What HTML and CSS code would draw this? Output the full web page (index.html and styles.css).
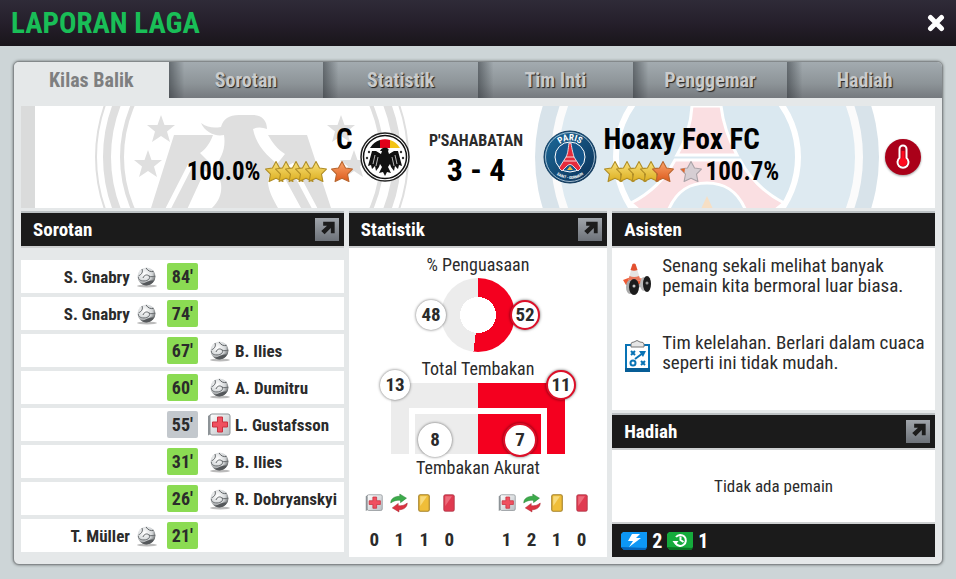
FILE: index.html
```
<!DOCTYPE html>
<html lang="id">
  <head>
    <meta charset="UTF-8" />
    <meta name="viewport" content="width=device-width, initial-scale=1.0" />
    <title>Laporan Laga</title>
    <link rel="stylesheet" href="styles.css">
  </head>
  <body>
    <!-- shared icons -->
    <svg class="defs" width="0" height="0" aria-hidden="true">
      <defs>
        <linearGradient id="gold" x1="0" y1="0" x2="0" y2="1">
          <stop offset="0" stop-color="#f8e07a" />
          <stop offset="1" stop-color="#dcae1e" />
        </linearGradient>
        <linearGradient id="orange" x1="0" y1="0" x2="0" y2="1">
          <stop offset="0" stop-color="#f9a36a" />
          <stop offset="1" stop-color="#dd5a1c" />
        </linearGradient>
        <linearGradient id="silver" x1="0" y1="0" x2="1" y2="1">
          <stop offset="0" stop-color="#ffffff" />
          <stop offset="1" stop-color="#b9bec2" />
        </linearGradient>
        <radialGradient id="leather" cx="0.4" cy="0.35" r="0.7">
          <stop offset="0" stop-color="#ffffff" />
          <stop offset="0.6" stop-color="#d5d8da" />
          <stop offset="1" stop-color="#4c4f51" />
        </radialGradient>
        <linearGradient id="psg" x1="0" y1="0" x2="1" y2="1">
          <stop offset="0" stop-color="#1d6c9c" />
          <stop offset="1" stop-color="#0b2f55" />
        </linearGradient>
        <path id="star-shape" d="M11 1.500l3.200 5.800 6.300 1-4.500 4.700 1.300 6.700-6.300-3-6.300 3L6 13 1.500 8.300l6.300-1z" />
        <symbol id="star-gold" viewBox="1 1 20 20">
          <use href="#star-shape" fill="url(#gold)" stroke="#b08d26" stroke-linejoin="round" />
        </symbol>
        <symbol id="star-orange" viewBox="1 1 20 20">
          <use href="#star-shape" fill="url(#orange)" stroke="#b9662f" stroke-linejoin="round" />
        </symbol>
        <symbol id="star-empty" viewBox="1 1 20 20">
          <use href="#star-shape" fill="#d6ced3" stroke="#aaa3a8" stroke-linejoin="round" />
          <path d="M1.500 8.300l4-.7L5 12z" fill="#e0662a" />
        </symbol>
        <symbol id="ball" viewBox="0 0 24 24">
          <ellipse cx="13" cy="21" rx="10" ry="1.500" fill="#777" opacity="0.500" />
          <circle cx="12.500" cy="11.500" r="9" fill="url(#leather)" />
          <path d="M8 4c1 3 0 5-3.500 7M12 3c2 3 4.500 4 7.500 3.500M9 13c1-3 4-4 6-2s-1 5-5 5-6-2-5.500-4M15 11c2 1 4 1 6 0" fill="none" stroke="#606467" stroke-width="1" />
          <path d="M6.500 18c2 .8 4 .3 6-1s5-1.800 7.500-1.500c-2 5-9.500 6.500-13.500 2.500z" fill="#55585b" />
        </symbol>
        <symbol id="medic" viewBox="0 0 24 24">
          <path d="M1 3l3-2v20l-3 1.500z" fill="#8d9397" />
          <rect x="3" y="1" width="20" height="21" rx="2" fill="url(#silver)" stroke="#8d9397" />
          <path d="M10.500 4h5v5h5v5h-5v5h-5v-5h-5V9h5z" fill="#f0505f" stroke="#c9303f" />
        </symbol>
        <symbol id="swap" viewBox="0 0 24 24">
          <path d="M1 12C1 6 6 3 13 3V0l9 5.500-8 6V8.500C9 8 5 9 1 12z" fill="#3cab4b" stroke="#237a31" stroke-width="0.600" />
          <path d="M23 12c0 6-5 9-11 9v3L3 18.500l8-6v3c4 .5 8 0 12-3.500z" fill="#dc3341" stroke="#a11f2b" stroke-width="0.600" />
        </symbol>
        <symbol id="yellow-card" viewBox="0 0 24 24">
          <rect x="5" y="1" width="14" height="22" rx="2" fill="#f0be38" stroke="#a5822a" stroke-width="1.500" />
          <path d="M7 3h9L7 16z" fill="#f8da7b" />
        </symbol>
        <symbol id="red-card" viewBox="0 0 24 24">
          <rect x="5" y="1" width="14" height="22" rx="2" fill="#e03a50" stroke="#a83343" stroke-width="1" />
          <path d="M7 3h9L7 16z" fill="#ed6c7b" />
        </symbol>
        <symbol id="open" viewBox="0 0 24 24">
          <path d="M8 4h12v12h-4v-5.500l-6.500 6.500L6 13.500 12 8H8z" fill="#1c1c1c" />
        </symbol>
      </defs>
    </svg>

    <header class="topbar">
      <h1>LAPORAN LAGA</h1>
      <button type="button" class="close" aria-label="Tutup">
        <svg width="18" height="18" viewBox="0 0 18 18">
          <path d="M3.500 3.500l11 11M14.500 3.500l-11 11" stroke="#fff" stroke-width="5" stroke-linecap="round" />
        </svg>
      </button>
    </header>

    <main>
      <div class="panel">
        <nav class="tabs">
          <button type="button" class="tab active">Kilas Balik</button>
          <button type="button" class="tab">Sorotan</button>
          <button type="button" class="tab">Statistik</button>
          <button type="button" class="tab">Tim Inti</button>
          <button type="button" class="tab">Penggemar</button>
          <button type="button" class="tab">Hadiah</button>
        </nav>

        <div class="content">
          <section class="banner">
            <div class="team home">
              <svg class="backdrop" width="316" height="102" viewBox="0 0 316 102" aria-hidden="true">
                <g fill="none" stroke="#dfdfdf">
                  <circle cx="158" cy="51" r="156" stroke-width="2" />
                  <circle cx="158" cy="51" r="145" stroke-width="8" />
                  <circle cx="158" cy="51" r="130" stroke-width="4" />
                </g>
                <g fill="#dfdfdf">
                  <path id="bg-star" d="M67 9l3.500 10H81l-8 6.500 3 10.500-9-6-9 6 3-10.500-8-6.500h10.500z" />
                  <use href="#bg-star" x="-13" y="35" />
                  <use href="#bg-star" x="180" />
                  <use href="#bg-star" x="193" y="35" />
                  <path d="M107 17c7 5 13 5 20 4 2-8 8-12 18-12h14c9 0 14 6 14 14-5-2-10-2-14 0 3 15 12 26 27 37-8 5-12 10-12 17 1 9 5 16 10 25h-66c8-8 10-16 9-24-1-7-5-12-9-15 10-10 14-21 12-34-9 2-19-3-23-12z" />
                  <path d="M80 29h39c-3 8-7 14-13 18l11 11-21 44H57z" />
                  <path d="M174 29h39l24 73h-30l-24-44 8-10c-8-5-13-12-17-19z" />
                </g>
                <g stroke="#fff" stroke-width="5">
                  <path d="M97 58L74 103M113 66l-17 37M197 58l24 45M182 66l16 37" />
                </g>
              </svg>
              <div class="team-info">
                <h2>C</h2>
                <div class="rating">
                  <span>100.0%</span>
                  <span class="stars">
                    <svg><use href="#star-gold" /></svg>
                    <svg><use href="#star-gold" /></svg>
                    <svg><use href="#star-gold" /></svg>
                    <svg><use href="#star-gold" /></svg>
                    <svg><use href="#star-gold" /></svg>
                    <svg class="extra"><use href="#star-orange" /></svg>
                  </span>
                </div>
              </div>
              <svg class="crest" width="50" height="50" viewBox="0 0 50 50" aria-hidden="true">
                <circle cx="25" cy="25" r="24" fill="#fff" stroke="#222" stroke-width="1.500" />
                <circle cx="25" cy="25" r="21.500" fill="#fff" stroke="#111" stroke-width="1.500" />
                <path d="M10 16a18 18 0 0 1 10-8v8z" fill="#111" />
                <path d="M20 8q5-1.500 10 0v8H20z" fill="#e2001a" />
                <path d="M30 8a18 18 0 0 1 10 8H30z" fill="#f3c415" />
                <path d="M20 19c1-3 4-4 7-3 2 1 2 2 1 3l1 3 5-3h4l4 15-3-1-1 4-3-3-1 5-3-4-1-3-2 3 3 6-4-1-2 4-2-4-4 1 3-6-2-3-1 3-3 4-1-5-3 3-1-4-3 1 4-15h4l5 3 1-3z" fill="#111" />
                <path d="M15 23l-2 9M18 25l-2 9M35 23l2 9M32 25l2 9" stroke="#fff" stroke-width="0.700" />
                <g fill="#333">
                  <circle cx="9" cy="20" r="1.200" /><circle cx="7" cy="26" r="1.200" />
                  <circle cx="41" cy="20" r="1.200" /><circle cx="43" cy="26" r="1.200" />
                </g>
              </svg>
            </div>

            <div class="score">
              <p>P'SAHABATAN</p>
              <strong>3 - 4</strong>
            </div>

            <div class="team away">
              <svg class="backdrop" width="344" height="102" viewBox="0 0 344 102" aria-hidden="true">
                <circle cx="172" cy="51" r="172" fill="#d8e3ea" />
                <circle cx="172" cy="51" r="152" fill="#deeaf1" stroke="#fbfbfb" stroke-width="8" />
                <circle cx="172" cy="51" r="91" fill="#dae8f0" stroke="#fff" stroke-width="6" />
                <path d="M157 0h29c2 18 8 34 16 49h-60c9-15 14-31 15-49zM140 54h65c10 19 25 33 44 43l-10 8h-28c-9-22-23-28-39-28s-30 6-39 28h-28l-9-8c20-10 34-24 44-43z" fill="#fadfe2" stroke="#fff" stroke-width="3" />
                <path d="M172 90l6 13h-12z" fill="#f6dfc5" />
              </svg>
              <svg class="crest" width="54" height="54" viewBox="0 0 54 54" aria-hidden="true">
                <defs>
                  <path id="arc-top" d="M10.500 27a16.500 16.500 0 0 1 33 0" />
                  <path id="arc-bottom" d="M5 27a22 22 0 0 0 44 0" />
                </defs>
                <circle cx="27" cy="27" r="26" fill="url(#psg)" stroke="#123a5c" />
                <circle cx="27" cy="27" r="24.500" fill="none" stroke="#c5d6e2" stroke-width="0.800" />
                <circle cx="27" cy="27" r="15" fill="#14558a" stroke="#fff" />
                <path d="M26 13h2c1 7 2 10 3 14l7 11-3 3-5-5c-2-2-4-2-6 0l-5 5-3-3 7-11c2-4 2-7 3-14z" fill="#e52b3c" stroke="#fff" stroke-width="0.800" />
                <path d="M23 27h8M21 31h12" stroke="#fff" stroke-width="0.800" />
                <path d="M27 36l3 4h-6z" fill="#e7b845" />
                <text class="crest-name"><textPath href="#arc-top" startOffset="50%">PARIS</textPath></text>
                <text class="crest-sub"><textPath href="#arc-bottom" startOffset="50%">SAINT - GERMAIN</textPath></text>
              </svg>
              <div class="team-info">
                <h2>Hoaxy Fox FC</h2>
                <div class="rating">
                  <span class="stars">
                    <svg><use href="#star-gold" /></svg>
                    <svg><use href="#star-gold" /></svg>
                    <svg><use href="#star-gold" /></svg>
                    <svg><use href="#star-gold" /></svg>
                    <svg><use href="#star-orange" /></svg>
                    <svg class="extra"><use href="#star-empty" /></svg>
                  </span>
                  <span>100.7%</span>
                </div>
              </div>
              <svg class="weather" width="38" height="38" viewBox="0 0 38 38" role="img" aria-label="Cuaca panas">
                <circle cx="19" cy="19" r="18" fill="#aa0019" />
                <path d="M15.500 11a3.500 3.500 0 0 1 7 0v9a5.500 5.500 0 1 1-7 0z" fill="#aa0019" stroke="#fff" stroke-width="2" />
                <path d="M19 13v10" stroke="#ff0a1e" stroke-width="3" />
                <circle cx="19" cy="24" r="4" fill="#ff0a1e" />
              </svg>
            </div>
          </section>

          <div class="columns">
            <section class="column">
              <div class="bar">
                <h3>Sorotan</h3>
                <button type="button" class="open" aria-label="Buka Sorotan"><svg><use href="#open" /></svg></button>
              </div>
              <ul class="events">
                <li>
                  <span class="player left">S. Gnabry <svg><use href="#ball" /></svg></span>
                  <span class="minute">84'</span>
                </li>
                <li>
                  <span class="player left">S. Gnabry <svg><use href="#ball" /></svg></span>
                  <span class="minute">74'</span>
                </li>
                <li>
                  <span class="minute">67'</span>
                  <span class="player"><svg><use href="#ball" /></svg> B. Ilies</span>
                </li>
                <li>
                  <span class="minute">60'</span>
                  <span class="player"><svg><use href="#ball" /></svg> A. Dumitru</span>
                </li>
                <li>
                  <span class="minute neutral">55'</span>
                  <span class="player"><svg><use href="#medic" /></svg> L. Gustafsson</span>
                </li>
                <li>
                  <span class="minute">31'</span>
                  <span class="player"><svg><use href="#ball" /></svg> B. Ilies</span>
                </li>
                <li>
                  <span class="minute">26'</span>
                  <span class="player"><svg><use href="#ball" /></svg> R. Dobryanskyi</span>
                </li>
                <li>
                  <span class="player left">T. Müller <svg><use href="#ball" /></svg></span>
                  <span class="minute">21'</span>
                </li>
              </ul>
            </section>

            <section class="column">
              <div class="bar">
                <h3>Statistik</h3>
                <button type="button" class="open" aria-label="Buka Statistik"><svg><use href="#open" /></svg></button>
              </div>
              <div class="stats">
                <h4>% Penguasaan</h4>
                <div class="possession">
                  <span class="value home-value">48</span>
                  <div class="donut"></div>
                  <span class="value away-value">52</span>
                </div>
                <h4>Total Tembakan</h4>
                <div class="shots">
                  <div class="on-target"></div>
                  <span class="value total-home">13</span>
                  <span class="value total-away">11</span>
                  <span class="value target-home">8</span>
                  <span class="value target-away">7</span>
                </div>
                <h4>Tembakan Akurat</h4>
                <div class="counts">
                  <table>
                    <tr>
                      <th><svg role="img" aria-label="Cedera"><use href="#medic" /></svg></th>
                      <th><svg role="img" aria-label="Pergantian"><use href="#swap" /></svg></th>
                      <th><svg role="img" aria-label="Kartu kuning"><use href="#yellow-card" /></svg></th>
                      <th><svg role="img" aria-label="Kartu merah"><use href="#red-card" /></svg></th>
                    </tr>
                    <tr><td>0</td><td>1</td><td>1</td><td>0</td></tr>
                  </table>
                  <table>
                    <tr>
                      <th><svg role="img" aria-label="Cedera"><use href="#medic" /></svg></th>
                      <th><svg role="img" aria-label="Pergantian"><use href="#swap" /></svg></th>
                      <th><svg role="img" aria-label="Kartu kuning"><use href="#yellow-card" /></svg></th>
                      <th><svg role="img" aria-label="Kartu merah"><use href="#red-card" /></svg></th>
                    </tr>
                    <tr><td>1</td><td>2</td><td>1</td><td>0</td></tr>
                  </table>
                </div>
              </div>
            </section>

            <section class="column">
              <div class="bar">
                <h3>Asisten</h3>
              </div>
              <div class="assistant">
                <div class="tip">
                  <svg width="30" height="34" viewBox="0 0 30 34" aria-hidden="true">
                    <path d="M1 18l8-3 14 2 2 4-10 5-11-3z" fill="#ef5a34" />
                    <path d="M10.500 2q1.500-1 3 0l5 16q-6 4-12 0z" fill="#e6e4e2" />
                    <path d="M10.500 2q1.500-1 3 0l2 6q-3.500 1.500-7 0z" fill="#e3502f" />
                    <path d="M7.500 14q4.500 2 9.500 0l1.500 4q-6 3-12 0z" fill="#e8775a" />
                    <path d="M13 23l8-2v3l-8 3z" fill="#aaa" />
                    <ellipse cx="22" cy="22" rx="4" ry="7" fill="#bbb" />
                    <ellipse cx="25" cy="22" rx="4" ry="8" fill="#1c1c1c" />
                    <ellipse cx="8" cy="25" rx="4" ry="7" fill="#aaa" />
                    <ellipse cx="12" cy="25" rx="5" ry="8" fill="#1c1c1c" />
                    <circle cx="12" cy="24" r="1.500" fill="#c5c5c5" />
                    <circle cx="25" cy="21" r="1.500" fill="#999" />
                  </svg>
                  <p>Senang sekali melihat banyak pemain kita bermoral luar biasa.</p>
                </div>
                <div class="tip">
                  <svg width="30" height="34" viewBox="0 0 30 34" aria-hidden="true">
                    <rect x="4" y="6" width="23" height="26" fill="#fff" stroke="#0873b5" stroke-width="2" />
                    <path d="M3 31h25" stroke="#075d96" stroke-width="4" />
                    <path d="M9 8V5q0-2 3-2 3-3 6 0 4 0 4 2v3z" fill="#e6e6e6" stroke="#777" />
                    <path d="M9 12l4 4M13 12l-4 4M19 22l4 4M23 22l-4 4M13 20l8-6" stroke="#0873b5" stroke-width="2" />
                    <path d="M17 12h7l-3 6z" fill="#0873b5" />
                    <circle cx="11" cy="24" r="2.500" fill="none" stroke="#0873b5" stroke-width="2" />
                  </svg>
                  <p>Tim kelelahan. Berlari dalam cuaca seperti ini tidak mudah.</p>
                </div>
              </div>
              <div class="bar">
                <h3>Hadiah</h3>
                <button type="button" class="open" aria-label="Buka Hadiah"><svg><use href="#open" /></svg></button>
              </div>
              <p class="no-player">Tidak ada pemain</p>
              <div class="rewards">
                <svg width="26" height="18" viewBox="0 0 26 18" role="img" aria-label="Energi">
                  <path d="M2 0h24v15l-2 3H3l-3-3V2z" fill="#0d97f5" />
                  <path d="M0 15l3 3h21l2-2z" fill="#0665ba" />
                  <path d="M11 2h8l-4 4h5L8 15l4-6H7z" fill="#fff" />
                </svg>
                <span>2</span>
                <svg width="26" height="18" viewBox="0 0 26 18" role="img" aria-label="Pemulihan">
                  <path d="M2 0h24v15l-2 3H3l-3-3V2z" fill="#15ab3c" />
                  <path d="M0 15l3 3h21l2-2z" fill="#087522" />
                  <path d="M8.500 11a5.500 5.500 0 1 0 .5-6M13.500 4.500V8l3 2" fill="none" stroke="#fff" stroke-width="2" />
                  <path d="M5.500 9h6l-3 4z" fill="#fff" />
                </svg>
                <span>1</span>
              </div>
            </section>
          </div>
        </div>
      </div>
    </main>
  </body>
</html>
```
FILE: styles.css
```
* {
  box-sizing: border-box;
}
body {
  font-family: "Liberation Sans Narrow", "Arial Narrow", "Roboto Condensed", "Liberation Sans", sans-serif;
  margin: 0;
  background: #cdd5d7;
  color: #2b2b2b;
}
h1,
h2,
h3,
h4,
p,
ul {
  margin: 0;
  padding: 0;
}
button {
  font-family: inherit;
  border: none;
  padding: 0;
  cursor: pointer;
}
svg {
  display: block;
  flex: none;
}
.defs {
  position: absolute;
}

.topbar {
  display: flex;
  align-items: center;
  justify-content: space-between;
  height: 46px;
  padding: 0 11px;
  background: linear-gradient(#2f2b38, #251f2b 50%, #19151a);
}
.topbar h1 {
  font-size: 29px;
  line-height: 44px;
  color: #19be57;
}
.close {
  background: none;
}

main {
  padding: 15px 13px 13px;
}
.panel {
  background: #e5e8e9;
  border: 1px solid #84898b;
  border-radius: 6px;
  box-shadow: 0 0 3px rgba(0, 0, 0, 0.5);
  overflow: hidden;
}
.tabs {
  display: grid;
  grid-template-columns: repeat(6, 1fr);
}
.tab {
  height: 36px;
  font-size: 20px;
  font-weight: bold;
  color: #c9cbcc;
  text-shadow: 1px 1px 1px #222;
  background: linear-gradient(90deg, rgba(40, 45, 50, 0.5), transparent 10%), linear-gradient(#a3abb0, #8d9498 60%, #75797e);
}
.tab.active {
  color: #7e7f80;
  text-shadow: none;
  background: #e5e8e9;
}
.content {
  padding: 8px 7px 7px;
}

/* match banner */
.banner {
  display: grid;
  grid-template-columns: 1fr 133px 1fr;
  height: 102px;
  margin-bottom: 3px;
  padding-right: 4px;
  background: linear-gradient(90deg, #dadbdb 14px, #fff 14px);
  overflow: hidden;
}
.team {
  position: relative;
  display: flex;
  align-items: center;
  gap: 7px;
}
.home {
  justify-content: flex-end;
}
.backdrop {
  position: absolute;
  top: 0;
}
.home .backdrop {
  right: 0;
}
.away .backdrop {
  left: -8px;
}
.crest,
.team-info,
.weather {
  position: relative;
}
.team-info {
  padding-bottom: 4px;
}
.team-info h2 {
  font-size: 29px;
  line-height: 34px;
  color: #000;
}
.home h2 {
  text-align: right;
}
.rating {
  display: flex;
  align-items: center;
  gap: 4px;
  font-size: 25px;
  line-height: 32px;
  font-weight: bold;
  color: #000;
}
.stars {
  display: flex;
}
.stars svg {
  width: 22px;
  height: 24px;
  margin-right: -12px;
}
.away .stars svg {
  margin-right: -10px;
}
.stars svg.extra,
.away .stars svg.extra {
  margin: 0 0 0 16px;
}
.crest-name,
.crest-sub {
  font-weight: bold;
  fill: #fff;
  text-anchor: middle;
}
.crest-name {
  font-size: 9px;
}
.crest-sub {
  font-size: 4px;
}
.weather {
  margin-left: auto;
  margin-right: 9px;
  filter: drop-shadow(0 1px 1px rgba(0, 0, 0, 0.4));
}
.score {
  text-align: center;
  padding-top: 25px;
}
.score p {
  font-size: 16px;
  line-height: 20px;
  font-weight: bold;
}
.score strong {
  display: block;
  font-size: 32px;
  line-height: 38px;
  color: #000;
}

.columns {
  display: grid;
  grid-template-columns: 5fr 4fr 5fr;
  gap: 5px;
}
.column {
  display: flex;
  flex-direction: column;
}
.bar {
  display: flex;
  align-items: center;
  justify-content: space-between;
  height: 37px;
  padding: 0 5px 0 12px;
  background: #1b1b1b;
  border-top: 2px solid #bcc1c3;
  border-bottom: 2px solid #ced0d1;
}
.bar h3 {
  font-size: 19px;
  color: #fff;
}
.open {
  width: 24px;
  height: 23px;
  background: linear-gradient(#a0a5ab, #6d7279);
}
.open svg {
  width: 24px;
  height: 23px;
}

/* highlights */
.events {
  display: grid;
  gap: 4px;
  padding-top: 12px;
  list-style: none;
}
.events li {
  display: grid;
  grid-template-columns: minmax(0, 1fr) 31px minmax(0, 1fr);
  align-items: center;
  height: 33px;
  background: #fff;
}
.minute {
  grid-column: 2;
  border-radius: 2px;
  background: #8bdb53;
  font-size: 18px;
  line-height: 27px;
  font-weight: bold;
  text-align: center;
}
.minute.neutral {
  background: #c3c8cd;
}
.player {
  display: flex;
  align-items: center;
  gap: 4px;
  padding: 0 9px;
  font-size: 17px;
  font-weight: bold;
  white-space: nowrap;
}
.player.left {
  justify-content: flex-end;
}
.player svg {
  width: 24px;
  height: 24px;
}

/* statistics */
.stats {
  flex: 1;
  padding: 6px 12px 0;
  background: #fff;
}
.stats h4 {
  font-size: 18px;
  line-height: 22px;
  font-weight: normal;
  text-align: center;
}
.possession {
  position: relative;
  width: 74px;
  margin: 2px auto 6px;
}
.donut {
  height: 74px;
  border-radius: 50%;
  background: radial-gradient(#fff 18px, transparent 18px), conic-gradient(#f4001f 52%, #ececec 52%);
}
.value {
  position: absolute;
  width: 30px;
  height: 30px;
  border-radius: 50%;
  background: #fff;
  box-shadow: 0 0 3px rgba(0, 0, 0, 0.6);
  font-size: 19px;
  line-height: 30px;
  font-weight: bold;
  text-align: center;
}
.away-value,
.total-away,
.target-away {
  border: 2px solid #dd0f28;
  line-height: 26px;
}
.home-value {
  top: 22px;
  left: -25px;
}
.away-value {
  top: 22px;
  right: -25px;
}
.shots {
  position: relative;
  width: 174px;
  height: 71px;
  margin: 3px auto;
  padding: 25px 18px 0;
  background: linear-gradient(90deg, #ececec 50%, #f4001f 50%);
}
.on-target {
  height: 46px;
  border: 6px solid #fff;
  border-bottom: none;
}
.total-home {
  top: -13px;
  left: -11px;
}
.total-away {
  top: -13px;
  right: -11px;
}
.target-home,
.target-away {
  top: 40px;
  width: 34px;
  height: 34px;
  line-height: 34px;
}
.target-home {
  left: 27px;
}
.target-away {
  right: 28px;
  line-height: 30px;
}
.counts {
  display: flex;
  justify-content: space-between;
  padding: 10px 1px 0;
}
.counts table {
  border-collapse: collapse;
}
.counts th,
.counts td {
  width: 25px;
  padding: 0;
}
.counts th {
  height: 28px;
}
.counts th svg {
  width: 18px;
  height: 20px;
  margin: auto;
}
.counts td {
  height: 35px;
  padding-top: 9px;
  font-size: 19px;
  font-weight: bold;
  text-align: center;
}

/* assistant and rewards */
.assistant {
  flex: 1;
  margin-bottom: 3px;
  padding: 8px 0 0 10px;
  background: #fff;
}
.tip {
  display: flex;
  gap: 10px;
  height: 77px;
}
.tip svg {
  margin-top: 6px;
}
.tip p {
  font-size: 19px;
  line-height: 20px;
}
.no-player {
  background: #fff;
  font-size: 17px;
  line-height: 72px;
  text-align: center;
}
.rewards {
  display: flex;
  align-items: center;
  gap: 5px;
  height: 35px;
  padding: 0 9px;
  background: #1b1b1b;
  border-top: 2px solid #ced0d1;
  color: #fff;
  font-size: 20px;
  font-weight: bold;
}
```
